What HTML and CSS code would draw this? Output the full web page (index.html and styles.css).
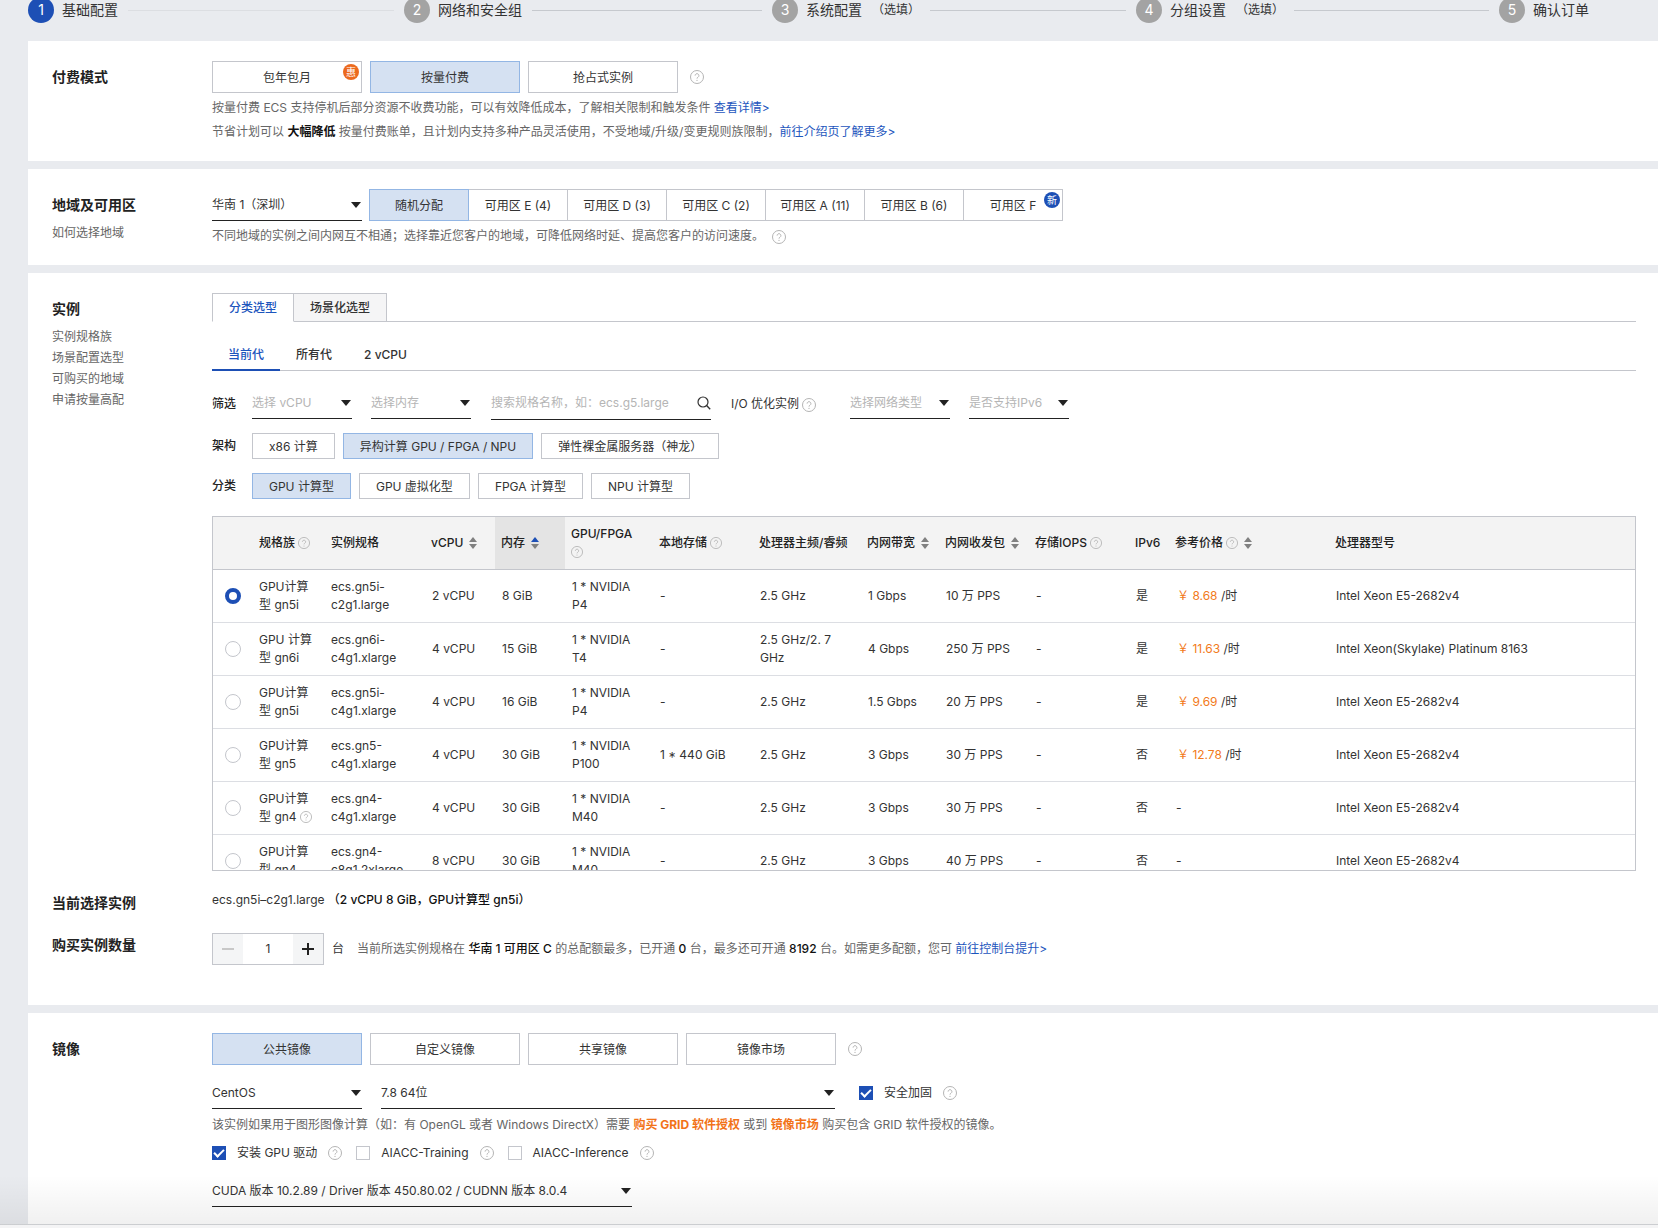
FILE: index.html
```html
<!DOCTYPE html>
<html lang="zh-CN">
<head>
<meta charset="utf-8">
<title>云服务器 ECS 购买</title>
<link rel="stylesheet" href="styles.css">
</head>
<body>
<svg class="sprite" aria-hidden="true">
  <symbol id="help" viewBox="0 0 14 14">
    <circle cx="7" cy="7" r="6.5" fill="none" stroke="currentColor"/>
    <path d="M5.1 5.6a1.9 1.9 0 1 1 2.9 1.6c-.7.4-1 .7-1 1.4" fill="none" stroke="currentColor"/>
    <circle cx="7" cy="10.4" r=".6" fill="currentColor"/>
  </symbol>
  <symbol id="sort" viewBox="0 0 8 12">
    <path class="sort-up" d="M4 0l4 5H0z"/>
    <path class="sort-down" d="M4 12l4-5H0z"/>
  </symbol>
  <symbol id="search" viewBox="0 0 14 14">
    <circle cx="6" cy="6" r="5" fill="none" stroke="currentColor" stroke-width="1.2"/>
    <path d="M9.6 9.6l3.6 3.6" stroke="currentColor" stroke-width="1.4"/>
  </symbol>
</svg>
<main class="page">
  <ol class="steps">
    <li class="step current"><span class="step-no">1</span><span class="step-title">基础配置</span></li>
    <li class="step"><span class="step-no">2</span><span class="step-title">网络和安全组</span></li>
    <li class="step"><span class="step-no">3</span><span class="step-title">系统配置</span><span class="step-note">（选填）</span></li>
    <li class="step"><span class="step-no">4</span><span class="step-title">分组设置</span><span class="step-note">（选填）</span></li>
    <li class="step"><span class="step-no">5</span><span class="step-title">确认订单</span></li>
  </ol>

  <section class="panel">
    <div class="row">
      <div class="side"><h2>付费模式</h2></div>
      <div class="content">
        <div class="buttons">
          <button type="button" class="btn">包年包月<span class="badge promo">惠</span></button>
          <button type="button" class="btn on">按量付费</button>
          <button type="button" class="btn">抢占式实例</button>
          <svg class="help"><use href="#help"/></svg>
        </div>
        <div class="hints">
          <p>按量付费 ECS 支持停机后部分资源不收费功能，可以有效降低成本，了解相关限制和触发条件 <a href="#">查看详情&gt;</a></p>
          <p>节省计划可以 <strong>大幅降低</strong> 按量付费账单，且计划内支持多种产品灵活使用，不受地域/升级/变更规则族限制，<a href="#">前往介绍页了解更多&gt;</a></p>
        </div>
      </div>
    </div>
  </section>

  <section class="panel">
    <div class="row">
      <div class="side"><h2>地域及可用区</h2><a href="#">如何选择地域</a></div>
      <div class="content">
        <div class="zone-row">
          <span class="select medium"><select aria-label="地域"><option>华南 1（深圳）</option></select></span>
          <div class="zones">
            <button type="button" class="btn on">随机分配</button>
            <button type="button" class="btn">可用区 E (4)</button>
            <button type="button" class="btn">可用区 D (3)</button>
            <button type="button" class="btn">可用区 C (2)</button>
            <button type="button" class="btn">可用区 A (11)</button>
            <button type="button" class="btn">可用区 B (6)</button>
            <button type="button" class="btn">可用区 F<span class="badge new">新</span></button>
          </div>
        </div>
        <div class="hints">
          <p>不同地域的实例之间内网互不相通；选择靠近您客户的地域，可降低网络时延、提高您客户的访问速度。 <svg class="help"><use href="#help"/></svg></p>
        </div>
      </div>
    </div>
  </section>

  <section class="panel instance">
    <div class="row">
      <div class="side"><h2>实例</h2><a href="#">实例规格族</a><a href="#">场景配置选型</a><a href="#">可购买的地域</a><a href="#">申请按量高配</a></div>
      <div class="content">
        <div class="card-tabs">
          <button type="button" class="on">分类选型</button>
          <button type="button">场景化选型</button>
        </div>
        <div class="line-tabs">
          <button type="button" class="on">当前代</button>
          <button type="button">所有代</button>
          <button type="button">2 vCPU</button>
        </div>
        <div class="filter">
          <span class="filter-name">筛选</span>
          <span class="select small"><select aria-label="vCPU"><option>选择 vCPU</option></select></span>
          <span class="select small"><select aria-label="内存"><option>选择内存</option></select></span>
          <span class="search"><input type="text" aria-label="规格名称" placeholder="搜索规格名称，如：ecs.g5.large"><svg><use href="#search"/></svg></span>
          <span class="io">I/O 优化实例<svg class="help"><use href="#help"/></svg></span>
          <span class="select small"><select aria-label="网络类型"><option>选择网络类型</option></select></span>
          <span class="select small"><select aria-label="IPv6"><option>是否支持IPv6</option></select></span>
        </div>
        <div class="choices">
          <span class="filter-name">架构</span>
          <button type="button" class="btn tag">x86 计算</button>
          <button type="button" class="btn tag on">异构计算 GPU / FPGA / NPU</button>
          <button type="button" class="btn tag">弹性裸金属服务器（神龙）</button>
        </div>
        <div class="choices">
          <span class="filter-name">分类</span>
          <button type="button" class="btn tag on">GPU 计算型</button>
          <button type="button" class="btn tag">GPU 虚拟化型</button>
          <button type="button" class="btn tag">FPGA 计算型</button>
          <button type="button" class="btn tag">NPU 计算型</button>
        </div>
        <div class="table-box">
          <table>
            <colgroup>
              <col class="w40"><col class="w72"><col class="w100"><col class="w70"><col class="w70"><col class="w88"><col class="w100"><col class="w108"><col class="w78"><col class="w90"><col class="w100"><col class="w40"><col class="w160"><col>
            </colgroup>
            <thead>
              <tr>
                <th></th>
                <th>规格族<svg class="help"><use href="#help"/></svg></th>
                <th>实例规格</th>
                <th>vCPU<svg class="sort"><use href="#sort"/></svg></th>
                <th class="sorted">内存<svg class="sort asc"><use href="#sort"/></svg></th>
                <th>GPU/FPGA<br><svg class="help first"><use href="#help"/></svg></th>
                <th>本地存储<svg class="help"><use href="#help"/></svg></th>
                <th>处理器主频/睿频</th>
                <th>内网带宽<svg class="sort"><use href="#sort"/></svg></th>
                <th>内网收发包<svg class="sort"><use href="#sort"/></svg></th>
                <th>存储IOPS<svg class="help"><use href="#help"/></svg></th>
                <th>IPv6</th>
                <th>参考价格<svg class="help"><use href="#help"/></svg><svg class="sort"><use href="#sort"/></svg></th>
                <th>处理器型号</th>
              </tr>
            </thead>
            <tbody>
              <tr><td><input type="radio" name="spec" aria-label="ecs.gn5i-c2g1.large" checked></td><td>GPU计算<br>型 gn5i</td><td>ecs.gn5i-<br>c2g1.large</td><td>2 vCPU</td><td>8 GiB</td><td>1 * NVIDIA<br>P4</td><td>-</td><td>2.5 GHz</td><td>1 Gbps</td><td>10 万 PPS</td><td>-</td><td>是</td><td><span class="price">￥ 8.68</span> /时</td><td>Intel Xeon E5-2682v4</td></tr>
              <tr><td><input type="radio" name="spec" aria-label="ecs.gn6i-c4g1.xlarge"></td><td>GPU 计算<br>型 gn6i</td><td>ecs.gn6i-<br>c4g1.xlarge</td><td>4 vCPU</td><td>15 GiB</td><td>1 * NVIDIA<br>T4</td><td>-</td><td>2.5 GHz/2. 7<br>GHz</td><td>4 Gbps</td><td>250 万 PPS</td><td>-</td><td>是</td><td><span class="price">￥ 11.63</span> /时</td><td>Intel Xeon(Skylake) Platinum 8163</td></tr>
              <tr><td><input type="radio" name="spec" aria-label="ecs.gn5i-c4g1.xlarge"></td><td>GPU计算<br>型 gn5i</td><td>ecs.gn5i-<br>c4g1.xlarge</td><td>4 vCPU</td><td>16 GiB</td><td>1 * NVIDIA<br>P4</td><td>-</td><td>2.5 GHz</td><td>1.5 Gbps</td><td>20 万 PPS</td><td>-</td><td>是</td><td><span class="price">￥ 9.69</span> /时</td><td>Intel Xeon E5-2682v4</td></tr>
              <tr><td><input type="radio" name="spec" aria-label="ecs.gn5-c4g1.xlarge"></td><td>GPU计算<br>型 gn5</td><td>ecs.gn5-<br>c4g1.xlarge</td><td>4 vCPU</td><td>30 GiB</td><td>1 * NVIDIA<br>P100</td><td>1 * 440 GiB</td><td>2.5 GHz</td><td>3 Gbps</td><td>30 万 PPS</td><td>-</td><td>否</td><td><span class="price">￥ 12.78</span> /时</td><td>Intel Xeon E5-2682v4</td></tr>
              <tr><td><input type="radio" name="spec" aria-label="ecs.gn4-c4g1.xlarge"></td><td>GPU计算<br>型 gn4<svg class="help"><use href="#help"/></svg></td><td>ecs.gn4-<br>c4g1.xlarge</td><td>4 vCPU</td><td>30 GiB</td><td>1 * NVIDIA<br>M40</td><td>-</td><td>2.5 GHz</td><td>3 Gbps</td><td>30 万 PPS</td><td>-</td><td>否</td><td>-</td><td>Intel Xeon E5-2682v4</td></tr>
              <tr><td><input type="radio" name="spec" aria-label="ecs.gn4-c8g1.2xlarge"></td><td>GPU计算<br>型 gn4</td><td>ecs.gn4-<br>c8g1.2xlarge</td><td>8 vCPU</td><td>30 GiB</td><td>1 * NVIDIA<br>M40</td><td>-</td><td>2.5 GHz</td><td>3 Gbps</td><td>40 万 PPS</td><td>-</td><td>否</td><td>-</td><td>Intel Xeon E5-2682v4</td></tr>
            </tbody>
          </table>
        </div>
      </div>
    </div>
    <div class="row chosen">
      <div class="side"><h2>当前选择实例</h2></div>
      <div class="content"><p>ecs.gn5i–c2g1.large <b>（2 vCPU 8 GiB，GPU计算型 gn5i）</b></p></div>
    </div>
    <div class="row amount">
      <div class="side"><h2><label for="count">购买实例数量</label></h2></div>
      <div class="content">
        <div class="stepper">
          <button type="button" aria-label="减少" disabled><svg viewBox="0 0 14 14"><path d="M1 7h12"/></svg></button>
          <input id="count" type="text" value="1">
          <button type="button" aria-label="增加"><svg viewBox="0 0 14 14"><path d="M1 7h12M7 1v12"/></svg></button>
        </div>
        <span>台</span>
        <p>当前所选实例规格在 <b>华南 1 可用区 C</b> 的总配额最多，已开通 <b>0</b> 台，最多还可开通 <b>8192</b> 台。如需更多配额，您可 <a href="#">前往控制台提升&gt;</a></p>
      </div>
    </div>
  </section>

  <section class="panel image">
    <div class="row">
      <div class="side"><h2>镜像</h2></div>
      <div class="content">
        <div class="buttons">
          <button type="button" class="btn on">公共镜像</button>
          <button type="button" class="btn">自定义镜像</button>
          <button type="button" class="btn">共享镜像</button>
          <button type="button" class="btn">镜像市场</button>
          <svg class="help"><use href="#help"/></svg>
        </div>
        <div class="os-row">
          <span class="select medium"><select aria-label="操作系统"><option>CentOS</option></select></span>
          <span class="select wide"><select aria-label="版本"><option>7.8 64位</option></select></span>
          <span class="option"><label><input type="checkbox" checked>安全加固</label><svg class="help"><use href="#help"/></svg></span>
        </div>
        <p class="grid-note">该实例如果用于图形图像计算（如：有 OpenGL 或者 Windows DirectX）需要 <a href="#">购买 GRID 软件授权</a> 或到 <a href="#">镜像市场</a> 购买包含 GRID 软件授权的镜像。</p>
        <div class="options">
          <span class="option"><label><input type="checkbox" checked>安装 GPU 驱动</label><svg class="help"><use href="#help"/></svg></span>
          <span class="option"><label><input type="checkbox">AIACC-Training</label><svg class="help"><use href="#help"/></svg></span>
          <span class="option"><label><input type="checkbox">AIACC-Inference</label><svg class="help"><use href="#help"/></svg></span>
        </div>
        <span class="select driver"><select aria-label="驱动版本"><option>CUDA 版本 10.2.89 / Driver 版本 450.80.02 / CUDNN 版本 8.0.4</option></select></span>
      </div>
    </div>
  </section>
</main>
<footer class="bottom-bar"></footer>
</body>
</html>
```
FILE: styles.css
```css
* {
  box-sizing: border-box;
}

body {
  margin: 0;
  min-height: 100vh;
  background: #e9ebef;
  color: #333;
  font: 12px/18px Inter, "Noto Sans CJK SC", sans-serif;
}

button, input, select {
  font: inherit;
  color: inherit;
}

button {
  cursor: pointer;
}

h2, p, ol {
  margin: 0;
  padding: 0;
}

a {
  color: #1c55bd;
  text-decoration: none;
}

b, strong {
  color: #111;
  font-weight: 500;
}

strong {
  font-weight: 700;
}

.sprite {
  display: none;
}

.page {
  padding-left: 28px;
}

/* steps */
.steps {
  display: grid;
  grid-template-rows: 20px;
  grid-template-columns: 376fr 368fr 364fr 363fr 159fr;
  margin-bottom: 21px;
  list-style: none;
}

.step {
  display: flex;
  align-items: center;
  font-size: 14px;
  white-space: nowrap;
}

.step:not(:last-child)::after {
  content: "";
  flex: 1;
  height: 1px;
  margin: 0 10px;
  background: #c6c9ce;
}

.step.current::after {
  background: #dcdee2;
}

.step-no {
  flex: none;
  width: 26px;
  margin-right: 8px;
  border-radius: 50%;
  background: #a3a3a3;
  color: #fff;
  line-height: 26px;
  text-align: center;
}

.step.current .step-no {
  background: #1d4fb5;
}

.step-note {
  margin-left: 10px;
  font-size: 12px;
}

/* panels */
.panel {
  margin-bottom: 8px;
  padding: 20px 22px 17px 24px;
  background: #fff;
}

.row {
  display: flex;
}

.side {
  flex: none;
  width: 160px;
}

.side h2 {
  padding-bottom: 1px;
  color: #222;
  font-size: 14px;
  font-weight: 600;
  line-height: 32px;
}

.side a {
  display: block;
  color: #666;
  line-height: 21px;
}

.content {
  flex: 1;
  min-width: 0;
}

.hints {
  padding-top: 3px;
  color: #666;
  line-height: 24px;
}

/* icons */
.help {
  width: 14px;
  height: 14px;
  color: #b4b4b4;
  vertical-align: middle;
}

.hints .help {
  margin-left: 5px;
}

.buttons .help {
  margin-left: 4px;
}

th .help, td .help {
  width: 12px;
  height: 12px;
  margin-left: 3px;
}

th .help.first {
  margin-left: 0;
}

.sort {
  width: 8px;
  height: 12px;
  margin-left: 6px;
  fill: #808080;
  vertical-align: middle;
}

.sort.asc {
  --up: #1d4fb5;
}

.sort-up {
  fill: var(--up, #808080);
}

/* buttons */
.buttons {
  display: flex;
  align-items: center;
  gap: 8px;
}

.btn {
  position: relative;
  width: 150px;
  height: 32px;
  padding: 2px 0 0;
  border: 1px solid #c4c6cc;
  background: #fff;
}

.btn.on {
  border-color: #93b6e4;
  background: #d5e1f2;
}

.badge {
  position: absolute;
  top: 2px;
  right: 2px;
  width: 16px;
  border-radius: 50%;
  color: #fff;
  font-size: 10px;
  line-height: 16px;
}

.badge.promo {
  background: #ec6a1e;
}

.badge.new {
  background: #1d4fb5;
}

.zone-row {
  display: flex;
  gap: 7px;
}

.zones {
  display: flex;
}

.zones .btn {
  flex: none;
  width: auto;
  min-width: 100px;
  margin-right: -1px;
  padding: 2px 14px 0;
}

.zones .btn.on {
  z-index: 1;
}

/* selects */
.select {
  display: inline-flex;
  align-items: center;
  position: relative;
  height: 32px;
  border-bottom: 1px solid #222;
}

.select::after {
  content: "";
  position: absolute;
  right: 1px;
  border: 5px solid transparent;
  border-top: 6px solid #222;
  border-bottom: 0;
  pointer-events: none;
}

.select select {
  width: 100%;
  padding: 1px 0 0;
  border: 0;
  background: none;
  appearance: none;
}

.medium {
  width: 150px;
}

.small {
  width: 100px;
  color: #b5b5b5;
}

.wide {
  width: 454px;
}

.driver {
  width: 420px;
}

/* instance tabs */
.card-tabs {
  display: flex;
  height: 29px;
  border-bottom: 1px solid #c4c6cc;
}

.card-tabs button {
  height: 29px;
  padding: 0 16px;
  border: 1px solid #c4c6cc;
  border-left: 0;
  background: #f5f5f6;
  font-weight: 500;
}

.card-tabs .on {
  border-left: 1px solid #c4c6cc;
  border-bottom-color: #fff;
  background: #fff;
}

.card-tabs .on, .line-tabs .on {
  color: #1c55bd;
}

.line-tabs {
  display: flex;
  height: 33px;
  margin-top: 16px;
  border-bottom: 1px solid #c4c6cc;
}

.line-tabs button {
  height: 33px;
  padding: 2px 16px 0;
  border: 0;
  border-bottom: 2px solid transparent;
  background: none;
  font-weight: 500;
}

.line-tabs .on {
  border-bottom-color: #1d4fb5;
}

/* filters */
.filter {
  display: flex;
  align-items: flex-start;
  height: 32px;
  margin-top: 16px;
  line-height: 34px;
}

.filter-name {
  width: 40px;
  color: #222;
  font-weight: 500;
}

.filter .select {
  margin-right: 19px;
}

.search {
  display: flex;
  align-items: center;
  width: 220px;
  height: 33px;
  margin: 0 20px 0 1px;
  border-bottom: 1px solid #222;
}

.search input {
  flex: 1;
  min-width: 0;
  height: 24px;
  padding: 0;
  border: 0;
  outline: 0;
}

.search ::placeholder {
  color: #b5b5b5;
}

.search svg {
  width: 14px;
  height: 14px;
}

.io {
  width: 119px;
}

.io .help {
  margin-left: 3px;
}

.choices {
  display: flex;
  gap: 8px;
  margin-top: 14px;
  line-height: 26px;
}

.choices .filter-name {
  width: 32px;
}

.btn.tag {
  width: auto;
  height: 26px;
  padding: 0 16px;
}

/* specification table */
.table-box {
  max-height: 355px;
  margin-top: 17px;
  overflow: auto;
  border: 1px solid #c4c6cc;
  scrollbar-width: none;
}

table {
  width: 100%;
  border-collapse: collapse;
  table-layout: fixed;
}

.w40 { width: 40px; }
.w70 { width: 70px; }
.w72 { width: 72px; }
.w78 { width: 78px; }
.w88 { width: 88px; }
.w90 { width: 90px; }
.w100 { width: 100px; }
.w108 { width: 108px; }
.w160 { width: 160px; }

th, td {
  height: 53px;
  padding: 0 6px;
  border-bottom: 1px solid #dcdee3;
  text-align: left;
  white-space: nowrap;
}

th {
  height: 52px;
  border-color: #c4c6cc;
  background: #f3f3f3;
  color: #222;
  font-weight: 500;
}

th.sorted {
  background: #e4e4e4;
}

td:nth-child(n+4) {
  padding-left: 7px;
}

.price {
  padding-left: 1px;
  color: #f27a20;
}

input[type="radio"] {
  display: block;
  width: 16px;
  height: 16px;
  margin: 0 0 0 6px;
  border: 1px solid #c4c6cc;
  border-radius: 50%;
  background: #fff;
  appearance: none;
}

input[type="radio"]:checked {
  border: 4px solid #1d4fb5;
}

/* chosen instance and amount */
.chosen {
  margin-top: 16px;
}

.chosen .content {
  line-height: 26px;
}

.amount {
  margin-top: 9px;
}

.amount .content {
  display: flex;
  align-items: center;
  padding-top: 4px;
}

.amount p {
  margin-left: 13px;
  color: #666;
}

.stepper {
  display: flex;
  width: 112px;
  height: 32px;
  margin-right: 8px;
  border: 1px solid #c4c6cc;
}

.stepper button {
  width: 30px;
  padding: 0;
  border: 0;
  background: #f4f5f6;
}

.stepper svg {
  display: block;
  width: 14px;
  height: 14px;
  margin: 0 auto;
  fill: none;
  stroke: #222;
  stroke-width: 2;
}

.stepper button:disabled svg {
  stroke: #c8c8c8;
}

.stepper input {
  width: 50px;
  padding: 0;
  border: 0;
  text-align: center;
}

.instance {
  padding-bottom: 40px;
}

/* image */
.os-row {
  display: flex;
  align-items: center;
  margin-top: 12px;
}

.os-row .wide {
  margin: 0 24px 0 19px;
}

.grid-note {
  margin-top: 3px;
  color: #666;
  line-height: 26px;
}

.grid-note a {
  color: #f27318;
  font-weight: 700;
}

.options {
  display: flex;
  gap: 14px;
  margin: 3px 0 10px;
}

.option, .option label {
  display: flex;
  align-items: center;
  gap: 11px;
}

.option {
  height: 24px;
}

input[type="checkbox"] {
  display: grid;
  place-items: center;
  width: 14px;
  height: 14px;
  margin: 0;
  border: 1px solid #c4c6cc;
  background: #fff;
  appearance: none;
}

input[type="checkbox"]:checked {
  border-color: #1d4fb5;
  background: #1d4fb5;
}

input[type="checkbox"]:checked::before {
  content: "";
  width: 8px;
  height: 4px;
  margin-bottom: 2px;
  border: solid #fff;
  border-width: 0 0 2px 2px;
  transform: rotate(-45deg);
}

.image {
  margin-bottom: 0;
}

/* bar pinned to the window's bottom edge, with its shadow above */
.bottom-bar {
  position: sticky;
  bottom: 0;
  height: 4px;
  border-top: 1px solid #d8dadd;
  background: #f4f4f5;
}

.bottom-bar::before {
  content: "";
  position: absolute;
  right: 0;
  bottom: 100%;
  left: 0;
  height: 50px;
  background: linear-gradient(transparent, rgba(0, 0, 0, 0.06));
  pointer-events: none;
}
```
